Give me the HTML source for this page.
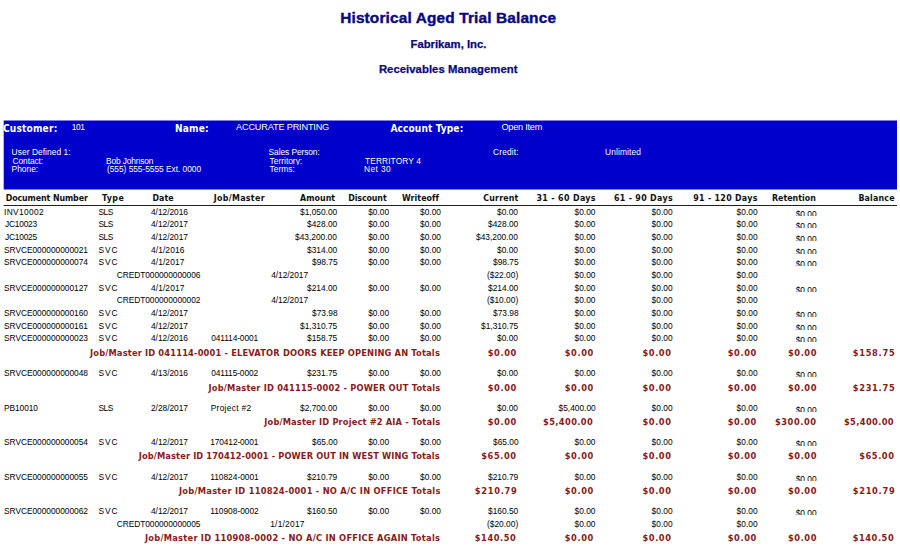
<!DOCTYPE html>
<html lang="en">
<head>
<meta charset="utf-8">
<title>Historical Aged Trial Balance</title>
<style>
html,body{margin:0;padding:0;background:#fff;}
body{width:900px;height:554px;position:relative;overflow:hidden;font-family:"Liberation Sans",sans-serif;}
.t{position:absolute;white-space:nowrap;line-height:12px;height:12px;}
.d{font-size:8.4px;color:#000;}
.hd{font-size:8.8px;font-weight:bold;color:#111;font-family:"DejaVu Sans Condensed","Liberation Sans",sans-serif;}
.tv{font-family:"DejaVu Sans","Liberation Sans",sans-serif;font-weight:bold;font-size:8.3px;color:#8b1a1a;}
.t1{font-size:15.4px;line-height:20px;height:20px;font-weight:bold;color:#080880;-webkit-text-stroke:0.4px #080880;font-family:"Liberation Sans",sans-serif;}
.t2{font-size:11.3px;line-height:16px;height:16px;font-weight:bold;color:#080880;-webkit-text-stroke:0.25px #080880;font-family:"Liberation Sans",sans-serif;}
.bl{font-size:10.1px;font-weight:bold;color:#fff;font-family:"DejaVu Sans Condensed","Liberation Sans",sans-serif;}
.bs{font-size:8.4px;color:#fff;}
.bm{font-size:9.2px;color:#fff;}
.bg{position:absolute;left:0;top:0;}

</style>
</head>
<body>
<svg class="bg" width="900" height="554" viewBox="0 0 900 554">
<rect x="3.7" y="120.5" width="893.3" height="69" fill="#0000cc"/>
<rect x="3.7" y="205" width="893.3" height="1" fill="#222"/>
</svg>
<span class="t t1" style="left:340.2px;top:8px;letter-spacing:0.15px;">Historical Aged Trial Balance</span>
<span class="t t2" style="left:410.5px;top:36px;letter-spacing:-0.01px;">Fabrikam, Inc.</span>
<span class="t t2" style="left:378.9px;top:61px;letter-spacing:0.05px;">Receivables Management</span>
<span class="t bl" style="left:2.9px;top:123px;letter-spacing:0.19px;">Customer:</span>
<span class="t bs" style="left:71.7px;top:121px;letter-spacing:-0.35px;">101</span>
<span class="t bl" style="left:175.0px;top:123px;letter-spacing:0.15px;">Name:</span>
<span class="t bm" style="left:236.0px;top:121px;letter-spacing:-0.19px;">ACCURATE PRINTING</span>
<span class="t bl" style="left:390.4px;top:123px;letter-spacing:0.10px;">Account Type:</span>
<span class="t bm" style="left:501.4px;top:121px;letter-spacing:-0.25px;">Open Item</span>
<span class="t bs" style="left:11.6px;top:146px;letter-spacing:0.06px;">User Defined 1:</span>
<span class="t bs" style="left:12.6px;top:155px;letter-spacing:-0.09px;">Contact:</span>
<span class="t bs" style="left:11.6px;top:163px;">Phone:</span>
<span class="t bs" style="left:106.0px;top:155px;letter-spacing:-0.14px;">Bob Johnson</span>
<span class="t bs" style="left:107.0px;top:163px;letter-spacing:-0.04px;">(555) 555-5555 Ext. 0000</span>
<span class="t bs" style="left:268.6px;top:146px;letter-spacing:-0.08px;">Sales Person:</span>
<span class="t bs" style="left:269.6px;top:155px;clip-path:inset(-2px -5px 2px -5px);">Territory:</span>
<span class="t bs" style="left:269.6px;top:163px;">Terms:</span>
<span class="t bs" style="left:365.0px;top:155px;letter-spacing:0.10px;">TERRITORY 4</span>
<span class="t bs" style="left:364.0px;top:163px;letter-spacing:0.40px;">Net 30</span>
<span class="t bs" style="left:493.0px;top:146px;letter-spacing:0.17px;">Credit:</span>
<span class="t bs" style="left:605.0px;top:146px;letter-spacing:0.12px;">Unlimited</span>
<span class="t hd" style="left:5.7px;top:192px;letter-spacing:-0.10px;">Document Number</span>
<span class="t hd" style="left:102.0px;top:192px;letter-spacing:0.43px;">Type</span>
<span class="t hd" style="left:152.5px;top:192px;">Date</span>
<span class="t hd" style="left:213.7px;top:192px;letter-spacing:0.33px;">Job/Master</span>
<span class="t hd" style="left:300.1px;top:192px;letter-spacing:0.04px;">Amount</span>
<span class="t hd" style="left:348.2px;top:192px;letter-spacing:-0.10px;">Discount</span>
<span class="t hd" style="left:402.0px;top:192px;letter-spacing:0.04px;">Writeoff</span>
<span class="t hd" style="left:483.3px;top:192px;letter-spacing:0.17px;">Current</span>
<span class="t hd" style="left:536.5px;top:192px;letter-spacing:0.36px;">31 - 60 Days</span>
<span class="t hd" style="left:613.9px;top:192px;letter-spacing:0.33px;">61 - 90 Days</span>
<span class="t hd" style="left:693.3px;top:192px;letter-spacing:0.29px;">91 - 120 Days</span>
<span class="t hd" style="left:772.0px;top:192px;">Retention</span>
<span class="t hd" style="left:858.4px;top:192px;letter-spacing:0.18px;">Balance</span>
<span class="t d" style="left:4.0px;top:206px;letter-spacing:0.33px;">INV10002</span>
<span class="t d" style="left:98.6px;top:206px;letter-spacing:-0.60px;">SLS</span>
<span class="t d" style="left:151.0px;top:206px;letter-spacing:-0.04px;">4/12/2016</span>
<span class="t d" style="left:300.0px;top:206px;">$1,050.00</span>
<span class="t d" style="left:368.2px;top:206px;">$0.00</span>
<span class="t d" style="left:420.0px;top:206px;">$0.00</span>
<span class="t d" style="left:497.0px;top:206px;">$0.00</span>
<span class="t d" style="left:574.5px;top:206px;">$0.00</span>
<span class="t d" style="left:651.6px;top:206px;">$0.00</span>
<span class="t d" style="left:736.6px;top:206px;">$0.00</span>
<span class="t d" style="left:795.7px;top:208px;clip-path:inset(-2px -5px 4px -5px);">$0.00</span>
<span class="t d" style="left:5.0px;top:218px;letter-spacing:-0.22px;">JC10023</span>
<span class="t d" style="left:98.6px;top:218px;letter-spacing:-0.60px;">SLS</span>
<span class="t d" style="left:151.0px;top:218px;letter-spacing:-0.04px;">4/12/2017</span>
<span class="t d" style="left:307.0px;top:218px;">$428.00</span>
<span class="t d" style="left:368.2px;top:218px;">$0.00</span>
<span class="t d" style="left:420.0px;top:218px;">$0.00</span>
<span class="t d" style="left:488.0px;top:218px;">$428.00</span>
<span class="t d" style="left:574.5px;top:218px;">$0.00</span>
<span class="t d" style="left:651.6px;top:218px;">$0.00</span>
<span class="t d" style="left:736.6px;top:218px;">$0.00</span>
<span class="t d" style="left:795.7px;top:220px;clip-path:inset(-2px -5px 4px -5px);">$0.00</span>
<span class="t d" style="left:5.0px;top:231px;letter-spacing:-0.22px;">JC10025</span>
<span class="t d" style="left:98.6px;top:231px;letter-spacing:-0.60px;">SLS</span>
<span class="t d" style="left:151.0px;top:231px;letter-spacing:-0.04px;">4/12/2017</span>
<span class="t d" style="left:295.0px;top:231px;">$43,200.00</span>
<span class="t d" style="left:368.2px;top:231px;">$0.00</span>
<span class="t d" style="left:420.0px;top:231px;">$0.00</span>
<span class="t d" style="left:476.0px;top:231px;">$43,200.00</span>
<span class="t d" style="left:574.5px;top:231px;">$0.00</span>
<span class="t d" style="left:651.6px;top:231px;">$0.00</span>
<span class="t d" style="left:736.6px;top:231px;">$0.00</span>
<span class="t d" style="left:795.7px;top:233px;clip-path:inset(-2px -5px 4px -5px);">$0.00</span>
<span class="t d" style="left:4.0px;top:244px;letter-spacing:-0.04px;">SRVCE000000000021</span>
<span class="t d" style="left:98.6px;top:244px;letter-spacing:0.90px;">SVC</span>
<span class="t d" style="left:151.0px;top:244px;letter-spacing:0.10px;">4/1/2016</span>
<span class="t d" style="left:307.0px;top:244px;">$314.00</span>
<span class="t d" style="left:368.2px;top:244px;">$0.00</span>
<span class="t d" style="left:420.0px;top:244px;">$0.00</span>
<span class="t d" style="left:497.0px;top:244px;">$0.00</span>
<span class="t d" style="left:574.5px;top:244px;">$0.00</span>
<span class="t d" style="left:651.6px;top:244px;">$0.00</span>
<span class="t d" style="left:736.6px;top:244px;">$0.00</span>
<span class="t d" style="left:795.7px;top:246px;clip-path:inset(-2px -5px 4px -5px);">$0.00</span>
<span class="t d" style="left:4.0px;top:256px;letter-spacing:-0.04px;">SRVCE000000000074</span>
<span class="t d" style="left:98.6px;top:256px;letter-spacing:0.90px;">SVC</span>
<span class="t d" style="left:151.0px;top:256px;letter-spacing:0.10px;">4/1/2017</span>
<span class="t d" style="left:312.0px;top:256px;">$98.75</span>
<span class="t d" style="left:368.2px;top:256px;">$0.00</span>
<span class="t d" style="left:420.0px;top:256px;">$0.00</span>
<span class="t d" style="left:493.0px;top:256px;">$98.75</span>
<span class="t d" style="left:574.5px;top:256px;">$0.00</span>
<span class="t d" style="left:651.6px;top:256px;">$0.00</span>
<span class="t d" style="left:736.6px;top:256px;">$0.00</span>
<span class="t d" style="left:795.7px;top:258px;clip-path:inset(-2px -5px 4px -5px);">$0.00</span>
<span class="t d" style="left:116.7px;top:269px;letter-spacing:-0.06px;">CREDT000000000006</span>
<span class="t d" style="left:271.2px;top:269px;letter-spacing:-0.04px;">4/12/2017</span>
<span class="t d" style="left:487.0px;top:269px;">($22.00)</span>
<span class="t d" style="left:574.5px;top:269px;">$0.00</span>
<span class="t d" style="left:651.6px;top:269px;">$0.00</span>
<span class="t d" style="left:736.6px;top:269px;">$0.00</span>
<span class="t d" style="left:4.0px;top:282px;letter-spacing:-0.04px;">SRVCE000000000127</span>
<span class="t d" style="left:98.6px;top:282px;letter-spacing:0.90px;">SVC</span>
<span class="t d" style="left:151.0px;top:282px;letter-spacing:0.10px;">4/1/2017</span>
<span class="t d" style="left:307.0px;top:282px;">$214.00</span>
<span class="t d" style="left:368.2px;top:282px;">$0.00</span>
<span class="t d" style="left:420.0px;top:282px;">$0.00</span>
<span class="t d" style="left:488.0px;top:282px;">$214.00</span>
<span class="t d" style="left:574.5px;top:282px;">$0.00</span>
<span class="t d" style="left:651.6px;top:282px;">$0.00</span>
<span class="t d" style="left:736.6px;top:282px;">$0.00</span>
<span class="t d" style="left:795.7px;top:284px;clip-path:inset(-2px -5px 4px -5px);">$0.00</span>
<span class="t d" style="left:116.7px;top:294px;letter-spacing:-0.06px;">CREDT000000000002</span>
<span class="t d" style="left:271.2px;top:294px;letter-spacing:-0.04px;">4/12/2017</span>
<span class="t d" style="left:487.0px;top:294px;">($10.00)</span>
<span class="t d" style="left:574.5px;top:294px;">$0.00</span>
<span class="t d" style="left:651.6px;top:294px;">$0.00</span>
<span class="t d" style="left:736.6px;top:294px;">$0.00</span>
<span class="t d" style="left:4.0px;top:307px;letter-spacing:-0.04px;">SRVCE000000000160</span>
<span class="t d" style="left:98.6px;top:307px;letter-spacing:0.90px;">SVC</span>
<span class="t d" style="left:151.0px;top:307px;letter-spacing:-0.04px;">4/12/2017</span>
<span class="t d" style="left:312.0px;top:307px;">$73.98</span>
<span class="t d" style="left:368.2px;top:307px;">$0.00</span>
<span class="t d" style="left:420.0px;top:307px;">$0.00</span>
<span class="t d" style="left:493.0px;top:307px;">$73.98</span>
<span class="t d" style="left:574.5px;top:307px;">$0.00</span>
<span class="t d" style="left:651.6px;top:307px;">$0.00</span>
<span class="t d" style="left:736.6px;top:307px;">$0.00</span>
<span class="t d" style="left:795.7px;top:309px;clip-path:inset(-2px -5px 4px -5px);">$0.00</span>
<span class="t d" style="left:4.0px;top:320px;letter-spacing:-0.04px;">SRVCE000000000161</span>
<span class="t d" style="left:98.6px;top:320px;letter-spacing:0.90px;">SVC</span>
<span class="t d" style="left:151.0px;top:320px;letter-spacing:-0.04px;">4/12/2017</span>
<span class="t d" style="left:300.0px;top:320px;">$1,310.75</span>
<span class="t d" style="left:368.2px;top:320px;">$0.00</span>
<span class="t d" style="left:420.0px;top:320px;">$0.00</span>
<span class="t d" style="left:481.0px;top:320px;">$1,310.75</span>
<span class="t d" style="left:574.5px;top:320px;">$0.00</span>
<span class="t d" style="left:651.6px;top:320px;">$0.00</span>
<span class="t d" style="left:736.6px;top:320px;">$0.00</span>
<span class="t d" style="left:795.7px;top:322px;clip-path:inset(-2px -5px 4px -5px);">$0.00</span>
<span class="t d" style="left:4.0px;top:332px;letter-spacing:-0.04px;">SRVCE000000000023</span>
<span class="t d" style="left:98.6px;top:332px;letter-spacing:0.90px;">SVC</span>
<span class="t d" style="left:151.0px;top:332px;letter-spacing:-0.04px;">4/12/2016</span>
<span class="t d" style="left:211.2px;top:332px;letter-spacing:-0.12px;">041114-0001</span>
<span class="t d" style="left:307.0px;top:332px;">$158.75</span>
<span class="t d" style="left:368.2px;top:332px;">$0.00</span>
<span class="t d" style="left:420.0px;top:332px;">$0.00</span>
<span class="t d" style="left:497.0px;top:332px;">$0.00</span>
<span class="t d" style="left:574.5px;top:332px;">$0.00</span>
<span class="t d" style="left:651.6px;top:332px;">$0.00</span>
<span class="t d" style="left:736.6px;top:332px;">$0.00</span>
<span class="t d" style="left:795.7px;top:334px;clip-path:inset(-2px -5px 4px -5px);">$0.00</span>
<span class="t tv" style="left:90.0px;top:347px;letter-spacing:0.17px;">Job/Master ID 041114-0001 - ELEVATOR DOORS KEEP OPENING AN Totals</span>
<span class="t tv" style="left:487.8px;top:347px;letter-spacing:0.55px;">$0.00</span>
<span class="t tv" style="left:564.8px;top:347px;letter-spacing:0.55px;">$0.00</span>
<span class="t tv" style="left:642.5px;top:347px;letter-spacing:0.55px;">$0.00</span>
<span class="t tv" style="left:727.8px;top:347px;letter-spacing:0.55px;">$0.00</span>
<span class="t tv" style="left:788.0px;top:347px;letter-spacing:0.55px;">$0.00</span>
<span class="t tv" style="left:852.7px;top:347px;letter-spacing:0.70px;">$158.75</span>
<span class="t d" style="left:4.0px;top:367px;letter-spacing:-0.04px;">SRVCE000000000048</span>
<span class="t d" style="left:98.6px;top:367px;letter-spacing:0.90px;">SVC</span>
<span class="t d" style="left:151.0px;top:367px;letter-spacing:-0.04px;">4/13/2016</span>
<span class="t d" style="left:211.2px;top:367px;letter-spacing:-0.12px;">041115-0002</span>
<span class="t d" style="left:307.0px;top:367px;">$231.75</span>
<span class="t d" style="left:368.2px;top:367px;">$0.00</span>
<span class="t d" style="left:420.0px;top:367px;">$0.00</span>
<span class="t d" style="left:497.0px;top:367px;">$0.00</span>
<span class="t d" style="left:574.5px;top:367px;">$0.00</span>
<span class="t d" style="left:651.6px;top:367px;">$0.00</span>
<span class="t d" style="left:736.6px;top:367px;">$0.00</span>
<span class="t d" style="left:795.7px;top:369px;clip-path:inset(-2px -5px 4px -5px);">$0.00</span>
<span class="t tv" style="left:208.5px;top:382px;letter-spacing:0.19px;">Job/Master ID 041115-0002 - POWER OUT Totals</span>
<span class="t tv" style="left:487.8px;top:382px;letter-spacing:0.55px;">$0.00</span>
<span class="t tv" style="left:564.8px;top:382px;letter-spacing:0.55px;">$0.00</span>
<span class="t tv" style="left:642.5px;top:382px;letter-spacing:0.55px;">$0.00</span>
<span class="t tv" style="left:727.8px;top:382px;letter-spacing:0.55px;">$0.00</span>
<span class="t tv" style="left:788.0px;top:382px;letter-spacing:0.55px;">$0.00</span>
<span class="t tv" style="left:852.7px;top:382px;letter-spacing:0.70px;">$231.75</span>
<span class="t d" style="left:4.0px;top:402px;letter-spacing:-0.08px;">PB10010</span>
<span class="t d" style="left:98.6px;top:402px;letter-spacing:-0.60px;">SLS</span>
<span class="t d" style="left:151.0px;top:402px;letter-spacing:-0.04px;">2/28/2017</span>
<span class="t d" style="left:210.7px;top:402px;letter-spacing:0.30px;">Project #2</span>
<span class="t d" style="left:300.0px;top:402px;">$2,700.00</span>
<span class="t d" style="left:368.2px;top:402px;">$0.00</span>
<span class="t d" style="left:420.0px;top:402px;">$0.00</span>
<span class="t d" style="left:497.0px;top:402px;">$0.00</span>
<span class="t d" style="left:558.5px;top:402px;">$5,400.00</span>
<span class="t d" style="left:651.6px;top:402px;">$0.00</span>
<span class="t d" style="left:736.6px;top:402px;">$0.00</span>
<span class="t d" style="left:795.7px;top:404px;clip-path:inset(-2px -5px 4px -5px);">$0.00</span>
<span class="t tv" style="left:264.3px;top:416px;letter-spacing:0.15px;">Job/Master ID Project #2 AIA - Totals</span>
<span class="t tv" style="left:487.8px;top:416px;letter-spacing:0.55px;">$0.00</span>
<span class="t tv" style="left:543.0px;top:416px;letter-spacing:0.38px;">$5,400.00</span>
<span class="t tv" style="left:642.5px;top:416px;letter-spacing:0.55px;">$0.00</span>
<span class="t tv" style="left:727.8px;top:416px;letter-spacing:0.55px;">$0.00</span>
<span class="t tv" style="left:775.0px;top:416px;letter-spacing:0.53px;">$300.00</span>
<span class="t tv" style="left:843.9px;top:416px;letter-spacing:0.38px;">$5,400.00</span>
<span class="t d" style="left:4.0px;top:436px;letter-spacing:-0.04px;">SRVCE000000000054</span>
<span class="t d" style="left:98.6px;top:436px;letter-spacing:0.90px;">SVC</span>
<span class="t d" style="left:151.0px;top:436px;letter-spacing:-0.04px;">4/12/2017</span>
<span class="t d" style="left:210.2px;top:436px;letter-spacing:-0.12px;">170412-0001</span>
<span class="t d" style="left:312.0px;top:436px;">$65.00</span>
<span class="t d" style="left:368.2px;top:436px;">$0.00</span>
<span class="t d" style="left:420.0px;top:436px;">$0.00</span>
<span class="t d" style="left:493.0px;top:436px;">$65.00</span>
<span class="t d" style="left:574.5px;top:436px;">$0.00</span>
<span class="t d" style="left:651.6px;top:436px;">$0.00</span>
<span class="t d" style="left:736.6px;top:436px;">$0.00</span>
<span class="t d" style="left:795.7px;top:438px;clip-path:inset(-2px -5px 4px -5px);">$0.00</span>
<span class="t tv" style="left:138.8px;top:450px;letter-spacing:0.11px;">Job/Master ID 170412-0001 - POWER OUT IN WEST WING Totals</span>
<span class="t tv" style="left:481.3px;top:450px;letter-spacing:0.54px;">$65.00</span>
<span class="t tv" style="left:564.8px;top:450px;letter-spacing:0.55px;">$0.00</span>
<span class="t tv" style="left:642.5px;top:450px;letter-spacing:0.55px;">$0.00</span>
<span class="t tv" style="left:727.8px;top:450px;letter-spacing:0.55px;">$0.00</span>
<span class="t tv" style="left:788.0px;top:450px;letter-spacing:0.55px;">$0.00</span>
<span class="t tv" style="left:859.2px;top:450px;letter-spacing:0.54px;">$65.00</span>
<span class="t d" style="left:4.0px;top:471px;letter-spacing:-0.04px;">SRVCE000000000055</span>
<span class="t d" style="left:98.6px;top:471px;letter-spacing:0.90px;">SVC</span>
<span class="t d" style="left:151.0px;top:471px;letter-spacing:-0.04px;">4/12/2017</span>
<span class="t d" style="left:210.2px;top:471px;letter-spacing:-0.02px;">110824-0001</span>
<span class="t d" style="left:307.0px;top:471px;">$210.79</span>
<span class="t d" style="left:368.2px;top:471px;">$0.00</span>
<span class="t d" style="left:420.0px;top:471px;">$0.00</span>
<span class="t d" style="left:488.0px;top:471px;">$210.79</span>
<span class="t d" style="left:574.5px;top:471px;">$0.00</span>
<span class="t d" style="left:651.6px;top:471px;">$0.00</span>
<span class="t d" style="left:736.6px;top:471px;">$0.00</span>
<span class="t d" style="left:795.7px;top:473px;clip-path:inset(-2px -5px 4px -5px);">$0.00</span>
<span class="t tv" style="left:179.0px;top:485px;letter-spacing:0.26px;">Job/Master ID 110824-0001 - NO A/C IN OFFICE Totals</span>
<span class="t tv" style="left:474.8px;top:485px;letter-spacing:0.70px;">$210.79</span>
<span class="t tv" style="left:564.8px;top:485px;letter-spacing:0.55px;">$0.00</span>
<span class="t tv" style="left:642.5px;top:485px;letter-spacing:0.55px;">$0.00</span>
<span class="t tv" style="left:727.8px;top:485px;letter-spacing:0.55px;">$0.00</span>
<span class="t tv" style="left:788.0px;top:485px;letter-spacing:0.55px;">$0.00</span>
<span class="t tv" style="left:852.7px;top:485px;letter-spacing:0.70px;">$210.79</span>
<span class="t d" style="left:4.0px;top:505px;letter-spacing:-0.04px;">SRVCE000000000062</span>
<span class="t d" style="left:98.6px;top:505px;letter-spacing:0.90px;">SVC</span>
<span class="t d" style="left:151.0px;top:505px;letter-spacing:-0.04px;">4/12/2017</span>
<span class="t d" style="left:210.2px;top:505px;letter-spacing:-0.02px;">110908-0002</span>
<span class="t d" style="left:307.0px;top:505px;">$160.50</span>
<span class="t d" style="left:368.2px;top:505px;">$0.00</span>
<span class="t d" style="left:420.0px;top:505px;">$0.00</span>
<span class="t d" style="left:488.0px;top:505px;">$160.50</span>
<span class="t d" style="left:574.5px;top:505px;">$0.00</span>
<span class="t d" style="left:651.6px;top:505px;">$0.00</span>
<span class="t d" style="left:736.6px;top:505px;">$0.00</span>
<span class="t d" style="left:795.7px;top:507px;clip-path:inset(-2px -5px 4px -5px);">$0.00</span>
<span class="t d" style="left:116.7px;top:518px;letter-spacing:-0.06px;">CREDT000000000005</span>
<span class="t d" style="left:270.2px;top:518px;letter-spacing:0.24px;">1/1/2017</span>
<span class="t d" style="left:487.0px;top:518px;">($20.00)</span>
<span class="t d" style="left:574.5px;top:518px;">$0.00</span>
<span class="t d" style="left:651.6px;top:518px;">$0.00</span>
<span class="t d" style="left:736.6px;top:518px;">$0.00</span>
<span class="t tv" style="left:145.0px;top:532px;letter-spacing:0.25px;">Job/Master ID 110908-0002 - NO A/C IN OFFICE AGAIN Totals</span>
<span class="t tv" style="left:474.8px;top:532px;letter-spacing:0.53px;">$140.50</span>
<span class="t tv" style="left:564.8px;top:532px;letter-spacing:0.55px;">$0.00</span>
<span class="t tv" style="left:642.5px;top:532px;letter-spacing:0.55px;">$0.00</span>
<span class="t tv" style="left:727.8px;top:532px;letter-spacing:0.55px;">$0.00</span>
<span class="t tv" style="left:788.0px;top:532px;letter-spacing:0.55px;">$0.00</span>
<span class="t tv" style="left:852.7px;top:532px;letter-spacing:0.53px;">$140.50</span>
</body>
</html>
